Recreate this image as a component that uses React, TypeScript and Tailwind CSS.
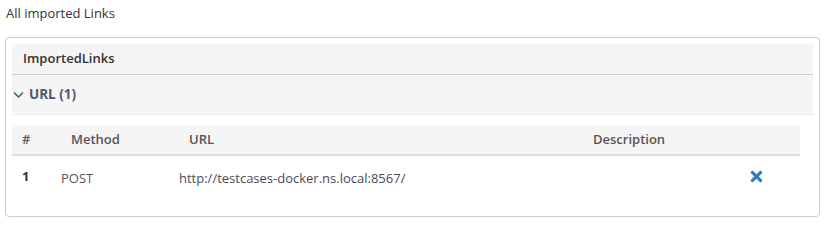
import { FaTimes } from "react-icons/fa"

interface ImportedLink {
  method: string
  url: string
  description: string
}

const links: ImportedLink[] = [
  { method: "POST", url: "http://testcases-docker.ns.local:8567/", description: "" },
]

export default function App() {
  return (
    <div
      className="px-[5px] pt-[4px] text-[13px] text-[#333]"
      style={{ fontFamily: '"Open Sans", "Liberation Sans", sans-serif' }}
    >
      <div className="h-[33px] pl-px leading-[18px]">All imported Links</div>

      <div className="h-[180px] rounded border border-[#ccc] p-[6px]">
        {/* panel heading */}
        <div className="flex h-[31px] items-center border-b border-[#ccc] bg-[#f5f5f5] pl-[11px] font-semibold">
          ImportedLinks
        </div>

        {/* group row */}
        <div className="flex h-[40px] items-center gap-[5px] border-b border-[#e6edf3] bg-[#f5f5f5] text-[13.5px] font-bold text-[#4c5b70]">
          <svg width="11" height="8" viewBox="0 0 11 8" className="ml-px mt-px" fill="none">
            <polyline points="1,1.5 5.5,6 10,1.5" stroke="currentColor" strokeWidth="1.5" />
          </svg>
          <span>URL ({links.length})</span>
        </div>

        <table className="mt-[10px] w-[788px] table-fixed border-collapse">
          <colgroup>
            <col className="w-[39px]" />
            <col className="w-[118px]" />
            <col className="w-[404px]" />
            <col className="w-[165px]" />
            <col className="w-[62px]" />
          </colgroup>
          <thead>
            <tr className="h-[30px] border-b-2 border-[#ddd] bg-[#f5f5f5] text-left font-semibold text-[#555]">
              <th className="pl-[10px] font-semibold">#</th>
              <th className="pl-[20px] font-semibold">Method</th>
              <th className="pl-[20px] font-semibold">URL</th>
              <th className="pl-[20px] font-semibold">Description</th>
              <th />
            </tr>
          </thead>
          <tbody>
            {links.map((link, i) => (
              <tr key={link.url} className="h-[46px] text-[#555]">
                <td className="pl-[10px] pb-[4px] font-bold text-[#333]">{i + 1}</td>
                <td className="pl-[10px]">{link.method}</td>
                <td className="pl-[10px] text-[#4d4858]">{link.url}</td>
                <td className="pl-[10px]">{link.description}</td>
                <td className="pl-[10px] pb-[4px]">
                  <FaTimes size={17} className="text-[#337ab7]" />
                </td>
              </tr>
            ))}
          </tbody>
        </table>
      </div>
    </div>
  )
}
